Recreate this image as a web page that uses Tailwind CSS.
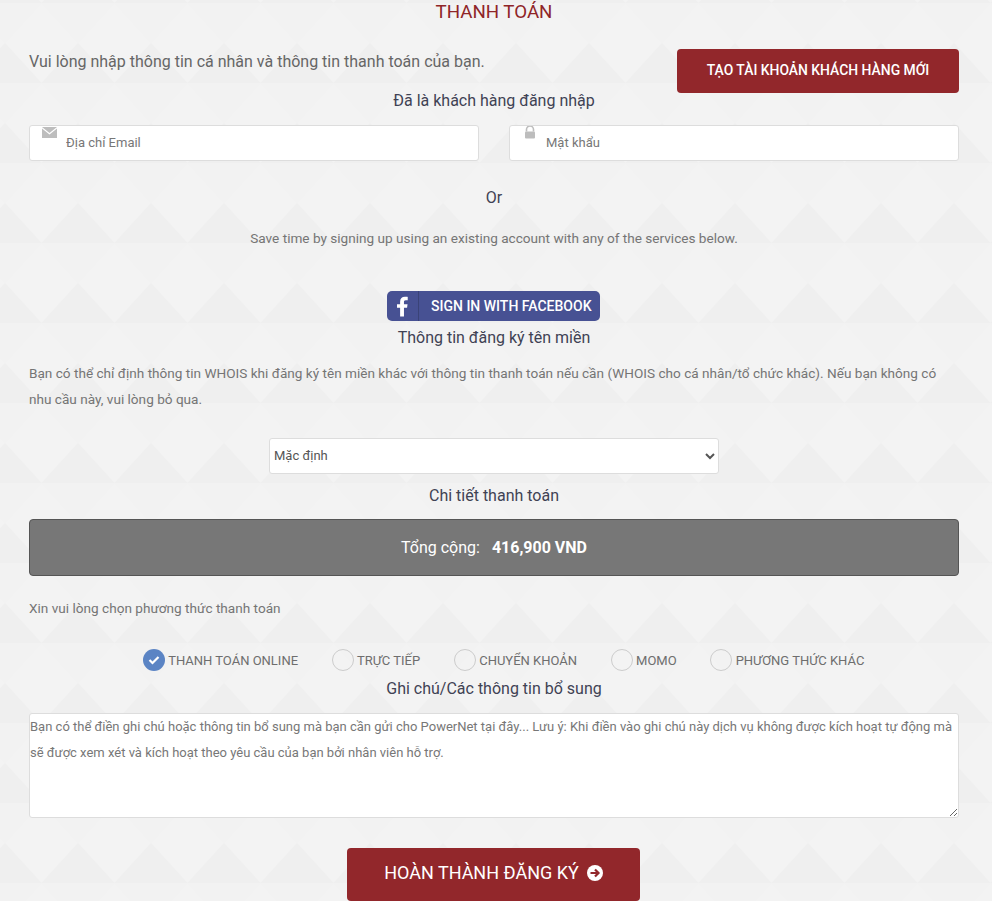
<!DOCTYPE html>
<html lang="vi">
    <head>
        <meta charset="UTF-8" />
        <meta name="viewport" content="width=device-width, initial-scale=1.0" />
        <title>Thanh toán</title>
        <script src="https://cdn.jsdelivr.net/npm/@tailwindcss/browser@4"></script>
    </head>

    <body class="relative h-[901px] overflow-hidden bg-[#f2f2f2] font-['Roboto',sans-serif] text-[#666]">
        <!-- Background pattern -->
        <svg class="absolute inset-0" width="992" height="901" aria-hidden="true">
            <defs>
                <pattern id="tri" width="73" height="80" patternUnits="userSpaceOnUse" x="5" y="3">
                    <rect width="73" height="80" fill="#f3f3f3" />
                    <path d="M0 0H36.5L0 40Z" fill="#f2f2f2" />
                    <path d="M73 0H36.5L73 40Z" fill="#f2f2f2" />
                    <path d="M0 80H36.5L0 40Z" fill="#efefef" />
                    <path d="M73 80H36.5L73 40Z" fill="#efefef" />
                </pattern>
            </defs>
            <rect width="992" height="901" fill="url(#tri)" />
        </svg>

        <main class="relative pr-[33px] pl-[29px]">
            <h1 class="h-[22px] pt-px text-center text-[18.72px] leading-[22px] text-[#8f2528]">THANH TOÁN</h1>

            <div class="mt-[27px] flex items-start justify-between">
                <p class="pt-px text-[16px] leading-[24px]">Vui lòng nhập thông tin cá nhân và thông tin thanh toán của bạn.</p>
                <a class="flex h-11 w-[282px] items-center justify-center rounded bg-[#92272b] pb-0.5 text-[13.9px] font-medium text-white">TẠO TÀI KHOẢN KHÁCH HÀNG MỚI</a>
            </div>

            <h2 class="-mt-1 text-center text-[16px] leading-[24px] text-[#3f4254]">Đã là khách hàng đăng nhập</h2>

            <div class="mt-3 grid grid-cols-2 gap-[30px]">
                <div class="relative">
                    <svg class="absolute top-[2px] left-[13px]" width="15" height="11" viewBox="0 0 15 11">
                        <path d="M0 0H15L7.5 6Z" fill="#bdbdbd" />
                        <path d="M0 1.5L7.5 7.5L15 1.5V11H0Z" fill="#bdbdbd" />
                    </svg>
                    <input type="text" placeholder="Địa chỉ Email" class="h-9 w-full rounded-[3px] border border-[#ddd] bg-white pb-0.5 pl-9 text-[13px] placeholder:text-[#777]" />
                </div>
                <div class="relative">
                    <svg class="absolute top-px left-[16px]" width="10" height="13" viewBox="0 0 10 13">
                        <path d="M1.5 5.5V3.5a3.5 3.5 0 0 1 7 0V5.5" fill="none" stroke="#bdbdbd" stroke-width="1.6" />
                        <rect y="5.5" width="10" height="7" rx="1" fill="#bdbdbd" />
                    </svg>
                    <input type="password" placeholder="Mật khẩu" class="h-9 w-full rounded-[3px] border border-[#ddd] bg-white pb-0.5 pl-9 text-[13px] placeholder:text-[#777]" />
                </div>
            </div>

            <p class="mt-6 pt-px text-center text-[16px] leading-[24px] text-[#3f4254]">Or</p>
            <p class="mt-4 text-center text-[13.6px] leading-[24px] text-[#757575]">Save time by signing up using an existing account with any of the services below.</p>

            <div class="mt-[41px] flex justify-center">
                <a class="mr-px flex h-[30px] w-[213px] items-center rounded-[5px] bg-[#475193] text-[14px] font-medium text-white">
                    <span class="flex h-full w-[32px] items-center justify-center border-r border-[#3a4378]">
                        <svg width="11" height="21" viewBox="0 0 12 22">
                            <path d="M3.4 22V12.4H0V8.6H3.4V5.8C3.4 2.3 5.5 0.4 8.6 0.4C10.1 0.4 11.4 0.5 11.7 0.6V4.1H9.6C7.9 4.1 7.6 4.9 7.6 6.1V8.6H11.5L11 12.4H7.6V22Z" fill="#fff" />
                        </svg>
                    </span>
                    <span class="ml-3">SIGN IN WITH FACEBOOK</span>
                </a>
            </div>

            <h2 class="mt-1 pt-px text-center text-[16px] leading-[24px] text-[#3f4254]">Thông tin đăng ký tên miền</h2>

            <p class="mt-2.5 text-[13.6px] leading-[26px] text-[#757575]">Bạn có thể chỉ định thông tin WHOIS khi đăng ký tên miền khác với thông tin thanh toán nếu cần (WHOIS cho cá nhân/tổ chức khác). Nếu bạn không có nhu cầu này, vui lòng bỏ qua.</p>

            <div class="mt-[26px] flex justify-center">
                <select class="h-9 w-[450px] rounded-[3px] border border-[#ddd] bg-white pb-0.5 text-[13px] text-[#555]">
                    <option>Mặc định</option>
                </select>
            </div>

            <h2 class="mt-[9px] pt-px text-center text-[16px] leading-[24px] text-[#3f4254]">Chi tiết thanh toán</h2>

            <div class="mt-[11px] flex h-[57px] items-center justify-center gap-3 rounded border border-[#555] bg-[#777] text-[16px] text-white">
                <span>Tổng cộng:</span>
                <strong class="font-bold">416,900 VND</strong>
            </div>

            <p class="mt-5 text-[13.6px] leading-[24px] text-[#757575]">Xin vui lòng chọn phương thức thanh toán</p>

            <div class="mt-7 flex h-6 items-center justify-center gap-[33.5px] pt-0.5 pl-[19px] text-[13px] text-[#6e6e6e]">
                <label class="flex items-center gap-[3.5px]">
                    <span class="-mt-0.5 flex size-[22px] items-center justify-center rounded-full bg-[#5b84c4]">
                        <svg width="12" height="10" viewBox="0 0 12 10"><path d="M1.5 5L4.5 8L10.5 2" fill="none" stroke="#fff" stroke-width="2.2" /></svg>
                    </span>
                    THANH TOÁN ONLINE
                </label>
                <label class="flex items-center gap-[3.5px]"><span class="-mt-0.5 size-[22px] rounded-full border border-[#ccc]"></span>TRỰC TIẾP</label>
                <label class="flex items-center gap-[3.5px]"><span class="-mt-0.5 size-[22px] rounded-full border border-[#ccc]"></span>CHUYỂN KHOẢN</label>
                <label class="flex items-center gap-[3.5px]"><span class="-mt-0.5 size-[22px] rounded-full border border-[#ccc]"></span>MOMO</label>
                <label class="flex items-center gap-[3.5px]"><span class="-mt-0.5 size-[22px] rounded-full border border-[#ccc]"></span>PHƯƠNG THỨC KHÁC</label>
            </div>

            <h2 class="mt-[5px] text-center text-[16px] leading-[24px] text-[#3f4254]">Ghi chú/Các thông tin bổ sung</h2>

            <textarea class="mt-3 block h-[105px] w-full rounded-[3px] border border-[#ddd] bg-white text-[13px] leading-[26px] placeholder:text-[#777]" placeholder="Bạn có thể điền ghi chú hoặc thông tin bổ sung mà bạn cần gửi cho PowerNet tại đây... Lưu ý: Khi điền vào ghi chú này dịch vụ không được kích hoạt tự động mà sẽ được xem xét và kích hoạt theo yêu cầu của bạn bởi nhân viên hỗ trợ."></textarea>

            <div class="mt-[30px] flex justify-center">
                <a class="mr-px flex h-[53px] w-[293px] items-center justify-center gap-2 rounded bg-[#92272b] pb-1 text-[18px] text-white">
                    HOÀN THÀNH ĐĂNG KÝ
                    <svg width="16" height="16" viewBox="0 0 16 16">
                        <circle cx="8" cy="8" r="8" fill="#fff" />
                        <path d="M3.5 8H11M8 4.5L11.5 8L8 11.5" fill="none" stroke="#92272b" stroke-width="2.2" />
                    </svg>
                </a>
            </div>
        </main>
    </body>
</html>
